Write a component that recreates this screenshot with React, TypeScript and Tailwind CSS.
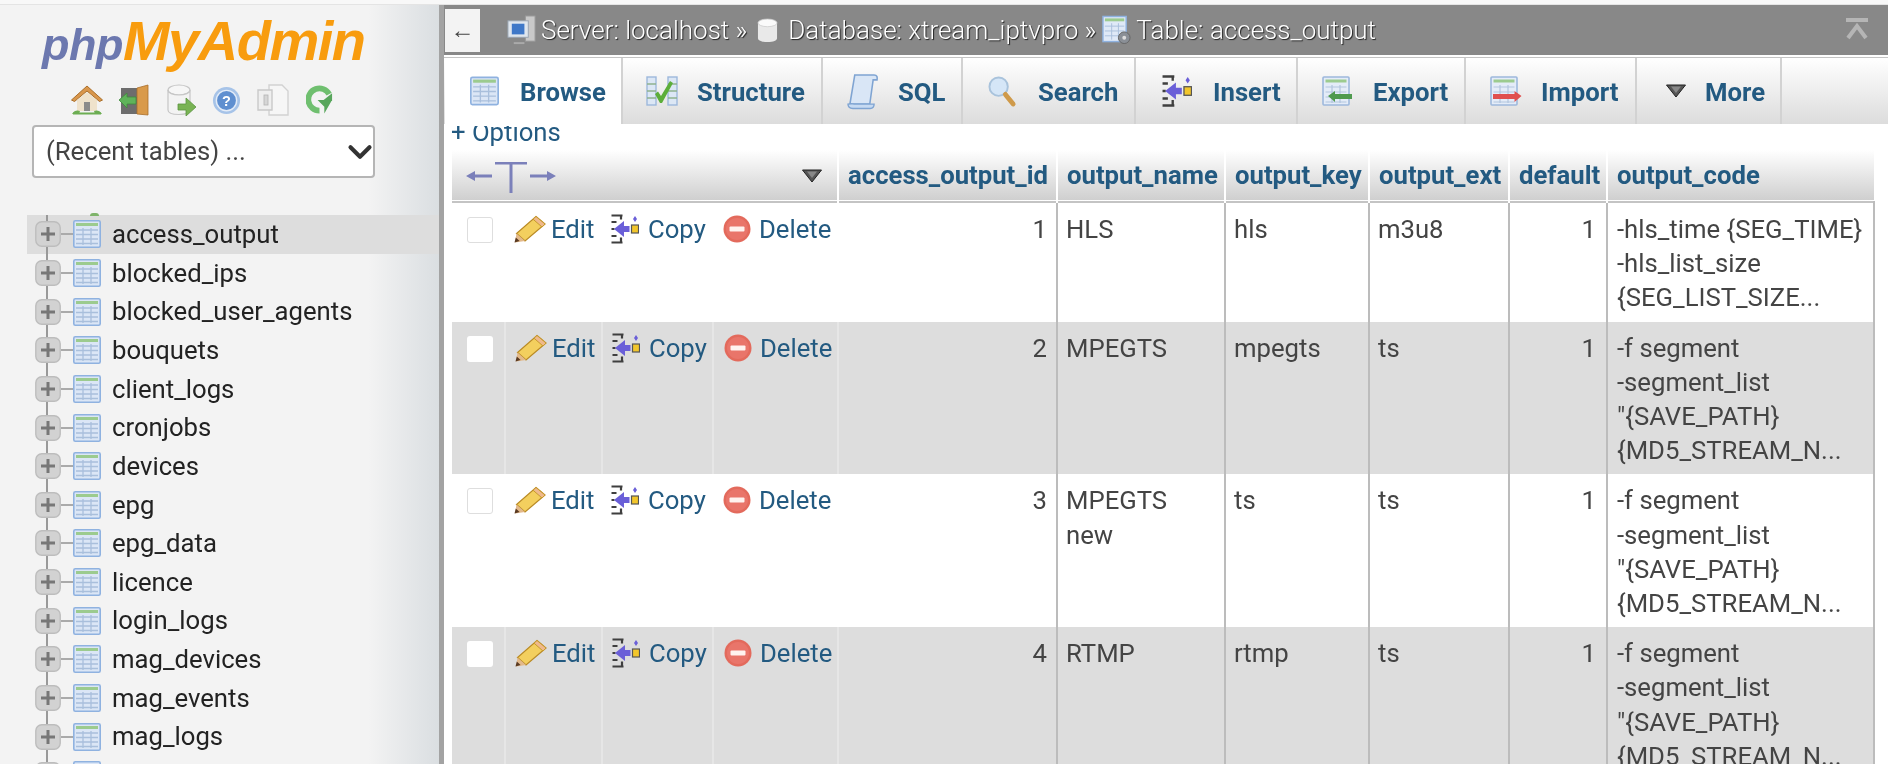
import React from 'react';
import { ChevronDown } from 'lucide-react';

const TABLES = [
  'access_output', 'blocked_ips', 'blocked_user_agents', 'bouquets', 'client_logs', 'cronjobs', 'devices',
  'epg', 'epg_data', 'licence', 'login_logs', 'mag_devices', 'mag_events', 'mag_logs', 'member_groups',
];

const ROWS = [
  { id: 1, name: ['HLS'], key: 'hls', ext: 'm3u8', code: ['-hls_time {SEG_TIME}', '-hls_list_size', '{SEG_LIST_SIZE...'] },
  { id: 2, name: ['MPEGTS'], key: 'mpegts', ext: 'ts', code: ['-f segment', '-segment_list', '"{SAVE_PATH}', '{MD5_STREAM_N...'] },
  { id: 3, name: ['MPEGTS', 'new'], key: 'ts', ext: 'ts', code: ['-f segment', '-segment_list', '"{SAVE_PATH}', '{MD5_STREAM_N...'] },
  { id: 4, name: ['RTMP'], key: 'rtmp', ext: 'ts', code: ['-f segment', '-segment_list', '"{SAVE_PATH}', '{MD5_STREAM_N...'] },
];

const TableIcon = ({ className = 'w-[28px] h-[28px]' }: { className?: string }) => (
  <svg viewBox="0 0 28 28" className={className}>
    <rect x="0.8" y="0.8" width="26.4" height="26.4" rx="1.5" fill="#dbe6f6" stroke="#8fb2e0" strokeWidth="1.6" />
    <rect x="3" y="3" width="22" height="3" fill="#9ccb8f" />
    <path d="M3 10h22M3 14.5h22M3 19h22M3 23.5h22M10 8v17M18 8v17" stroke="#a9bfdc" strokeWidth="1.3" fill="none" />
  </svg>
);

const Expander = () => (
  <svg viewBox="0 0 26 26" className="w-[26px] h-[26px]">
    <rect x="0.8" y="0.8" width="24.4" height="24.4" rx="6" fill="#d2d2d2" stroke="#bdbdbd" strokeWidth="1.4" />
    <path d="M6 13h14M13 6v14" stroke="#777" strokeWidth="3" />
  </svg>
);

const InsertIcon = ({ className = 'w-[28px] h-[30px]' }: { className?: string }) => (
  <svg viewBox="0 0 28 30" className={className}>
    <path d="M0.5 1.5h11M10 1.5v4M0.5 28.5h11M10 28.5v-5M0.5 8h5M0.5 15h3M0.5 22h5" stroke="#3f3f3f" strokeWidth="2.2" fill="none" />
    <path d="M3 15l10-8v5h5.5v6H13v5z" fill="#6a5fd8" />
    <path d="M24 2l2 3-2 3-2-3z" fill="#6a5fd8" />
    <rect x="20.5" y="11" width="7" height="8" fill="#f2c62c" stroke="#555" strokeWidth="1.2" />
  </svg>
);

const PencilIcon = () => (
  <svg viewBox="0 0 32 28" className="w-[32px] h-[28px]">
    <path d="M22 1.5l9 7.5L11 26l-8.500-7.500z" fill="#f3cf5e" stroke="#b98a25" strokeWidth="1.2" />
    <path d="M22 1.5l9 7.5-3 3-9-7.800z" fill="#efb98c" stroke="#c79a2c" strokeWidth="1" />
    <path d="M2.5 18.500L11 26l-10 1.500z" fill="#e3b98a" />
    <path d="M0.500 27.500l1.300-5 3.800 3.500z" fill="#5a3a22" />
  </svg>
);

const DeleteIcon = () => (
  <svg viewBox="0 0 28 28" className="w-[28px] h-[28px]">
    <circle cx="14" cy="14" r="13.5" fill="#e36a5c" />
    <circle cx="14" cy="14" r="11" fill="#e9756a" />
    <rect x="6.5" y="11.5" width="15" height="5" rx="1" fill="#fff3ef" />
  </svg>
);

const TabTable = ({ arrow }: { arrow?: 'in' | 'out' }) => (
  <svg viewBox="0 0 32 30" className="w-[32px] h-[30px]">
    <rect x="1" y="1" width="26" height="28" rx="1" fill="#e4ecf8" stroke="#9db8dc" strokeWidth="1.6" />
    <rect x="3.5" y="3.5" width="21" height="3" fill="#9ccb8f" />
    <path d="M3.5 11h21M3.5 16h21M3.5 21h21M3.5 26h21M10 9v18M18 9v18" stroke="#b2c5de" strokeWidth="1.2" fill="none" />
    {arrow === 'in' && <path d="M6 20l7-5v3h17v5H13v3z" fill="#4f9a4f" />}
    {arrow === 'out' && <path d="M31.5 20l-7-5v3H3v5h21.5v3z" fill="#e0504f" />}
  </svg>
);

const Triangle = ({ className }: { className: string }) => (
  <svg viewBox="0 0 22 14" className={className}>
    <path d="M1.5 1h19L11 13z" fill="#555" stroke="#222" strokeWidth="1" />
    <path d="M6 2.5h10L11 9z" fill="#888" />
  </svg>
);

const TABS: { label: string; w: string; icon: React.ReactNode; active?: boolean; left: string; gap: string }[] = [
  { label: 'Browse', w: 'w-[178px]', left: 'pl-[25px]', gap: 'gap-[21px]', active: true, icon: <TableIcon className="w-[29px] h-[30px]" /> },
  {
    label: 'Structure', w: 'w-[200px]', left: 'pl-[23px]', gap: 'gap-[19px]',
    icon: (
      <svg viewBox="0 0 32 30" className="w-[32px] h-[30px]">
        <rect x="1" y="1" width="9" height="28" fill="#dce7f5" stroke="#9db8dc" strokeWidth="1.4" />
        <rect x="22" y="1" width="9" height="28" fill="#dce7f5" stroke="#9db8dc" strokeWidth="1.4" />
        <path d="M1 8h9M1 15h9M1 22h9M22 8h9M22 15h9M22 22h9" stroke="#8fb28f" strokeWidth="1.4" />
        <path d="M9 18l3-2.5 3 4.5L24 5l3 2-11 20h-2z" fill="#5cae3a" />
      </svg>
    ),
  },
  {
    label: 'SQL', w: 'w-[140px]', left: 'pl-[24px]', gap: 'gap-[20px]',
    icon: (
      <svg viewBox="0 0 32 38" className="w-[31px] h-[37px]">
        <path d="M8 2h20c3 0 3.500 2 3 5h-4l-3.500 25H3z" fill="#d9e6f6" stroke="#7fa4d2" strokeWidth="1.6" />
        <path d="M1 32c0 4 3 4.5 5 4.500h18c3 0 4-2 4-4.500H8c-2 0-3-1-7 0z" fill="#c6daf2" stroke="#7fa4d2" strokeWidth="1.4" />
      </svg>
    ),
  },
  {
    label: 'Search', w: 'w-[173px]', left: 'pl-[25px]', gap: 'gap-[21px]',
    icon: (
      <svg viewBox="0 0 30 34" className="w-[29px] h-[33px]">
        <circle cx="11" cy="12" r="9.5" fill="#d5e6f7" stroke="#a9c3dc" strokeWidth="2" />
        <path d="M18 20l8 10" stroke="#cf9a4a" strokeWidth="5" strokeLinecap="round" />
      </svg>
    ),
  },
  { label: 'Insert', w: 'w-[162px]', left: 'pl-[26px]', gap: 'gap-[21px]', icon: <InsertIcon className="w-[30px] h-[36px]" /> },
  { label: 'Export', w: 'w-[168px]', left: 'pl-[24px]', gap: 'gap-[19px]', icon: <TabTable arrow="in" /> },
  { label: 'Import', w: 'w-[171px]', left: 'pl-[24px]', gap: 'gap-[19px]', icon: <TabTable arrow="out" /> },
  { label: 'More', w: 'w-[145px]', left: 'pl-[28px]', gap: 'gap-[18px]', icon: <Triangle className="w-[22px] h-[14px]" /> },
];

const HEADERS = ['access_output_id', 'output_name', 'output_key', 'output_ext', 'default', 'output_code'];

const NavIcons = () => (
  <div className="flex items-center h-[32px] pl-[71px]">
    {/* home */}
    <svg viewBox="0 0 32 30" className="w-[32px] h-[30px]">
      <path d="M0.5 15L16 1l15.5 14-3 1.5L16 6 3.5 16.5z" fill="#d9964b" stroke="#a96f2b" strokeWidth="1" />
      <path d="M6 15L16 7l10 8v11H6z" fill="#efe2cb" />
      <rect x="13" y="17" width="6" height="9" fill="#8b8b8b" />
      <path d="M1 29c2-4 6-4 8-3l-1 3zM31 29c-2-4-6-4-8-3l1 3z" fill="#6cad52" />
      <rect x="2" y="27.5" width="28" height="2" fill="#6cad52" />
    </svg>
    {/* exit */}
    <svg viewBox="0 0 32 32" className="w-[32px] h-[32px] ml-[14px]">
      <rect x="4" y="4" width="20" height="26" fill="#6d6d6d" />
      <path d="M20 4l11-3v30l-11-1z" fill="#d99a4a" stroke="#a96f2b" strokeWidth="0.8" />
      <path d="M2 16l8-7v4h9v7h-9v4z" fill="#5fb35a" stroke="#3f8a3c" strokeWidth="0.8" />
    </svg>
    {/* query window */}
    <svg viewBox="0 0 30 32" className="w-[30px] h-[32px] ml-[18px]">
      <ellipse cx="12" cy="6" rx="11" ry="5" fill="#f6f6f6" stroke="#c6c6c6" strokeWidth="1.2" />
      <path d="M1 6v20c0 3 5 4.5 11 4.5s11-1.5 11-4.5V6c0 3-5 5-11 5S1 9 1 6z" fill="#f3f3f3" stroke="#c6c6c6" strokeWidth="1.2" />
      <path d="M11 20h8v-6l10 9-10 9v-6h-8z" fill="#79b354" stroke="#5a9440" strokeWidth="0.8" />
    </svg>
    {/* docs */}
    <svg viewBox="0 0 30 30" className="w-[29px] h-[29px] ml-[15px]">
      <circle cx="15" cy="15" r="14" fill="#a6c3e8" />
      <circle cx="15" cy="15" r="10.5" fill="#5f8fd0" stroke="#e3ecf8" strokeWidth="1.5" />
      <text x="15" y="20.5" textAnchor="middle" fontSize="15" fontWeight="700" fill="#fff" fontFamily="Liberation Sans">?</text>
    </svg>
    {/* phpinfo */}
    <svg viewBox="0 0 32 32" className="w-[32px] h-[32px] ml-[16px]">
      <path d="M12 1h13l6 6v24H12z" fill="#f6f6f6" stroke="#d2d2d2" strokeWidth="1.4" />
      <path d="M1 6h14v20H1z" fill="#efefef" stroke="#c9c9c9" strokeWidth="1.4" />
      <rect x="7" y="11" width="4" height="10" fill="#d6d6d6" stroke="#b4b4b4" strokeWidth="0.8" />
    </svg>
    {/* reload */}
    <svg viewBox="0 0 28 30" className="w-[27px] h-[30px] ml-[17px]">
      <path d="M24 9A11.5 11.5 0 1 0 14 26" fill="none" stroke="#6fbf6f" strokeWidth="6" />
      <path d="M27 15H12l7 7v7z" fill="#58a65c" />
      <path d="M27 8v8H17z" fill="#58a65c" />
    </svg>
  </div>
);

const Sidebar = () => (
  <aside className="w-[444px] shrink-0 h-full overflow-hidden border-r-[5px] border-[#a3a3a3] bg-[linear-gradient(to_right,#f3f3f3_84%,#dadee1)]">
    <div className="pl-[42px] h-[79px] pt-[6px] leading-[60px] font-bold italic [font-family:'Liberation_Sans',sans-serif]">
      <span className="text-[#6c78af] text-[45px] tracking-[-0.5px]">php</span>
      <span className="text-[#f89c0e] text-[56px] tracking-[-1.5px]">MyAdmin</span>
    </div>
    <NavIcons />
    <div className="ml-[32px] mt-[9px] w-[343px] h-[53px] flex items-center justify-between pl-[12px] bg-white border-2 border-[#b5b5b5] rounded-[4px] text-[25.7px] text-[#444] [font-family:Roboto,sans-serif]">
      <span>(Recent tables) ...</span>
      <ChevronDown size={38} strokeWidth={2.6} className="text-[#333] shrink-0 -mr-[6px]" />
    </div>
    <div className="mt-[37px] relative">
      <div className="absolute left-[90px] top-[-2px] w-[9px] h-[3px] rounded-t-full bg-[#7fb46a]" />
      {TABLES.map((t, i) => (
        <div key={t} className={`h-[38.65px] ml-[27px] flex items-center ${i === 0 ? 'bg-[#dddddd]' : ''}`}>
          <div className="relative w-[26px] h-full ml-[8px] flex items-center">
            <div className="absolute left-[11px] top-0 bottom-0 w-[2px] bg-[#999]" />
            <div className="relative"><Expander /></div>
          </div>
          <div className="w-[12px] h-[2px] bg-[#aaa]" />
          <TableIcon />
          <span className="ml-[11px] text-[25.7px] text-[#222] [font-family:Roboto,sans-serif]">{t}</span>
        </div>
      ))}
    </div>
  </aside>
);

const TopBar = () => (
  <div className="h-[50px] shrink-0 bg-[#888888] flex items-center text-[26px] font-light text-white [text-shadow:1px_1px_1px_#222]">
    <div className="w-[35px] h-[43px] ml-[1px] bg-[#f3f3f3] flex items-center justify-center text-[#444] text-[24px] [text-shadow:none]">←</div>
    <svg viewBox="0 0 32 32" className="w-[31px] h-[31px] ml-[26px]">
      <rect x="20" y="1" width="10" height="26" fill="#c9c9c9" stroke="#999" />
      <rect x="2" y="6" width="21" height="17" fill="#dfe6ee" stroke="#9aa5b1" />
      <rect x="6" y="9" width="13" height="11" fill="#3f78c8" />
      <path d="M8 28h11v2H8z" fill="#aaa" />
    </svg>
    <span className="ml-[4px]">Server: localhost »</span>
    <svg viewBox="0 0 22 26" className="w-[21px] h-[25px] ml-[10px]">
      <path d="M1 5v16c0 2.5 4 4 10 4s10-1.5 10-4V5z" fill="#e9e9e9" />
      <ellipse cx="11" cy="5" rx="10" ry="4" fill="#fafafa" stroke="#ccc" strokeWidth="0.8" />
    </svg>
    <span className="ml-[10px]">Database: xtream_iptvpro »</span>
    <svg viewBox="0 0 30 30" className="w-[29px] h-[30px] ml-[6px]">
      <rect x="1" y="1" width="24" height="26" fill="#dfe9f7" stroke="#8fb2e0" strokeWidth="1.5" />
      <rect x="3" y="3" width="20" height="3" fill="#9ccb8f" />
      <path d="M3 11h20M3 16h20M3 21h20M10 8v17M17 8v17" stroke="#a9bfdc" />
      <circle cx="23" cy="23" r="6" fill="#8a8f96" stroke="#666" />
      <circle cx="23" cy="23" r="2" fill="#ddd" />
    </svg>
    <span className="ml-[5px]">Table: access_output</span>
    <svg viewBox="0 0 24 24" className="w-[24px] h-[24px] ml-auto mr-[19px]">
      <path d="M1 2h22M3 20L12 8l9 12" stroke="#b5b5b5" strokeWidth="4" fill="none" />
    </svg>
  </div>
);

const Tabs = () => (
  <div className="h-[66px] shrink-0 pl-[1px] flex bg-[linear-gradient(to_bottom,#ffffff,#dcdcdc)]">
    {TABS.map(t => (
      <div
        key={t.label}
        className={`${t.w} ${t.left} ${t.gap} flex items-center h-full shrink-0 border-r-2 border-[#d2d2d2] ${t.active ? 'bg-white' : ''}`}
      >
        <span className="shrink-0 flex">{t.icon}</span>
        <span className="pt-[3px] text-[25.7px] font-bold text-[#235a81]">{t.label}</span>
      </div>
    ))}
  </div>
);

const DataTable = () => (
  <table className="table-fixed border-collapse w-[1422px] ml-[8px] text-[25.7px] leading-[34.2px] text-[#444]">
    <colgroup>
      <col className="w-[53px]" />
      <col className="w-[97px]" />
      <col className="w-[111px]" />
      <col className="w-[125px]" />
      <col className="w-[219px]" />
      <col className="w-[168px]" />
      <col className="w-[144px]" />
      <col className="w-[140px]" />
      <col className="w-[98px]" />
      <col className="w-[267px]" />
    </colgroup>
    <thead>
      <tr className="h-[52px] bg-[linear-gradient(to_bottom,#ffffff,#cfcfcf)] border-b-2 border-[#c4c4c4]">
        <th colSpan={4} className="border-r-2 border-white p-0">
          <div className="flex items-center justify-between pl-[13px] pr-[14px]">
            <svg viewBox="0 0 92 34" className="w-[92px] h-[34px]">
              <path d="M1 17l9-5v3.5h17v3H10V22zM91 17l-9-5v3.5H65v3h17V22z" fill="#7b80ba" />
              <path d="M30 3h32v2.5H47.5V34h-3V5.5H30z" fill="#7b80ba" />
            </svg>
            <Triangle className="w-[22px] h-[14px]" />
          </div>
        </th>
        {HEADERS.map((h, i) => (
          <th key={h} className={`text-left font-bold text-[#235a81] pl-[9px] pr-0 whitespace-nowrap ${i < 5 ? 'border-r-2 border-white' : ''}`}>
            {h}
          </th>
        ))}
      </tr>
    </thead>
    <tbody>
      {ROWS.map((r, i) => {
        const line = 'border-r-2 border-[#bcbcbc]';
        const soft = i % 2 === 1 ? 'border-r-2 border-[#e6e6e6]' : '';
        return (
          <tr key={r.id} className={i % 2 === 1 ? 'bg-[#dddddd]' : 'bg-white'}>
            <td className={`align-top pt-[14px] pl-[15px] ${soft}`}>
              <div className={`w-[26px] h-[26px] bg-white rounded-[3px] ${i % 2 === 1 ? '' : 'border border-[#dedede]'}`} />
            </td>
            <td className={`align-top pt-[9px] pl-[9px] ${soft}`}>
              <div className="flex items-center gap-[5px] text-[#235a81] h-[34px]"><PencilIcon />Edit</div>
            </td>
            <td className={`align-top pt-[9px] pl-[9px] ${soft}`}>
              <div className="flex items-center gap-[9px] text-[#235a81] h-[34px]"><InsertIcon />Copy</div>
            </td>
            <td className={`align-top pt-[9px] pl-[10px] ${soft}`}>
              <div className="flex items-center gap-[8px] text-[#235a81] h-[34px]"><DeleteIcon />Delete</div>
            </td>
            <td className={`align-top pt-[9px] pb-[7px] pr-[9px] text-right ${line}`}>{r.id}</td>
            <td className={`align-top pt-[9px] pb-[7px] pl-[8px] ${line}`}>{r.name.map(n => <div key={n}>{n}</div>)}</td>
            <td className={`align-top pt-[9px] pb-[7px] pl-[8px] ${line}`}>{r.key}</td>
            <td className={`align-top pt-[9px] pb-[7px] pl-[8px] ${line}`}>{r.ext}</td>
            <td className={`align-top pt-[9px] pb-[7px] pr-[10px] text-right ${line}`}>1</td>
            <td className={`align-top pt-[9px] pb-[7px] pl-[9px] whitespace-nowrap ${line}`}>{r.code.map((c, k) => <div key={k}>{c}</div>)}</td>
          </tr>
        );
      })}
    </tbody>
  </table>
);

const App: React.FC = () => (
  <div className="w-[1888px] h-[764px] overflow-hidden bg-white flex flex-col blur-[0.6px] [font-family:Roboto,sans-serif]">
    <div className="h-[5px] shrink-0 bg-[#f8f8f8] border-b border-[#e4e4e4]" />
    <div className="flex flex-1 min-h-0">
      <Sidebar />
      <main className="flex-1 min-w-0 h-full overflow-hidden flex flex-col">
        <TopBar />
        <div className="h-[3px] shrink-0 bg-white border-b border-[#c4c4c4]" />
        <Tabs />
        {/* the active tab hangs over the top of this line */}
        <div className="h-[26px] shrink-0 pl-[7px] overflow-hidden border-t-2 border-white text-[25.7px] leading-[12px] text-[#235a81]">+ Options</div>
        <DataTable />
      </main>
    </div>
  </div>
);

export default App;
